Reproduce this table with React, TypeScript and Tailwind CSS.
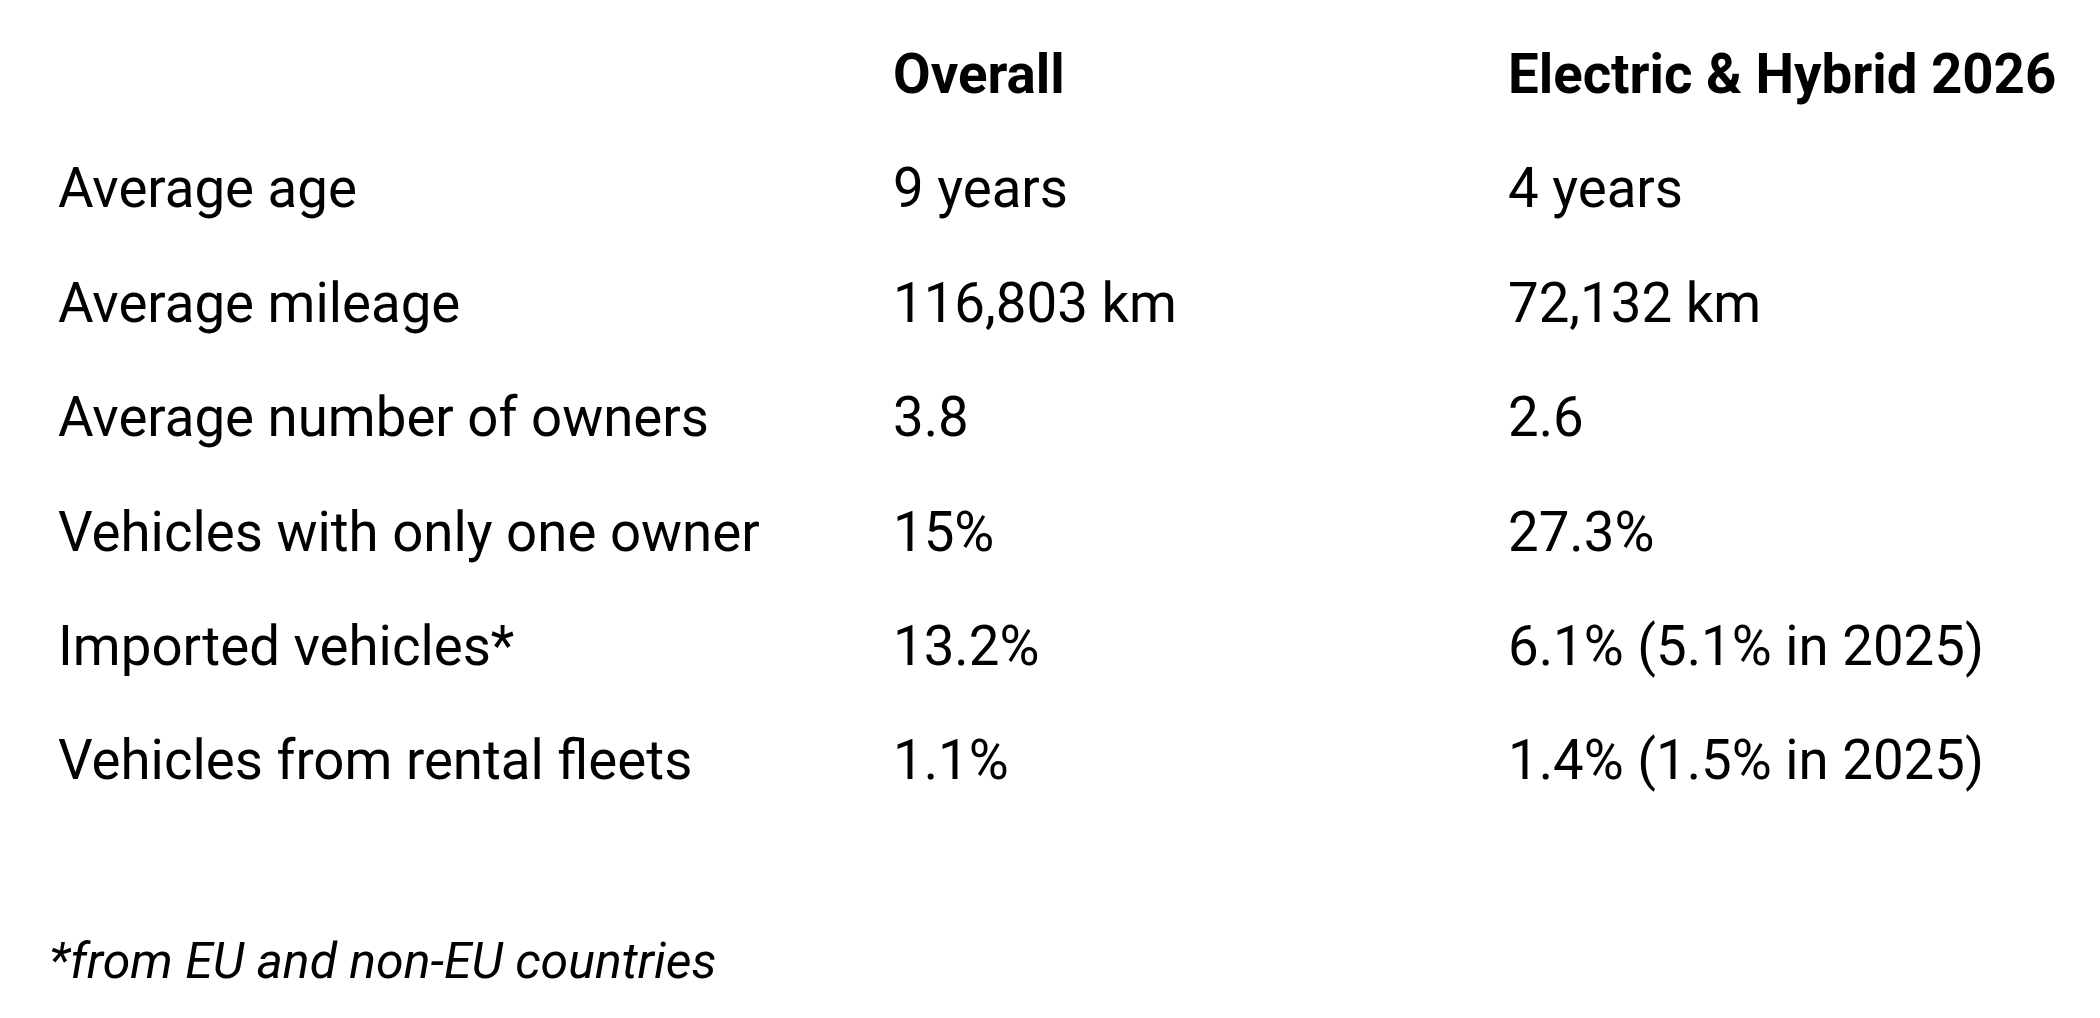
const rows = [
  { label: "Average age", overall: "9 years", ev: "4 years" },
  { label: "Average mileage", overall: "116,803 km", ev: "72,132 km" },
  { label: "Average number of owners", overall: "3.8", ev: "2.6" },
  { label: "Vehicles with only one owner", overall: "15%", ev: "27.3%" },
  { label: "Imported vehicles*", overall: "13.2%", ev: "6.1% (5.1% in 2025)" },
  { label: "Vehicles from rental fleets", overall: "1.1%", ev: "1.4% (1.5% in 2025)" },
];

const App = () => {
  return (
    <div className="min-h-screen bg-white text-black font-['Roboto',sans-serif]">
      <div className="pt-[17px] pl-[58px]">
        {/* Table */}
        <div className="grid grid-cols-[835px_615px_1fr] text-[54.6px] leading-[114.4px]">
          <div />
          <div className="font-bold">Overall</div>
          <div className="font-bold whitespace-nowrap">Electric &amp; Hybrid 2026</div>
          {rows.map((row, index) => (
            <div key={index} className="contents">
              <div className="whitespace-nowrap">{row.label}</div>
              <div className="whitespace-nowrap">{row.overall}</div>
              <div className="whitespace-nowrap">{row.ev}</div>
            </div>
          ))}
        </div>
      </div>

      {/* Footnote */}
      <p className="mt-[106px] pl-[49px] text-[50px] italic">*from EU and non-EU countries</p>
    </div>
  );
};

export default App;
